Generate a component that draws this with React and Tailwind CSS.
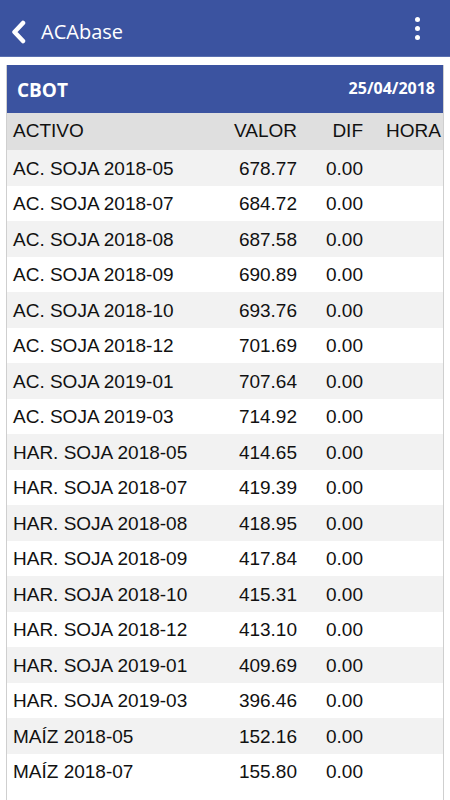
import React from "react";

const rows = [
  ["AC. SOJA 2018-05", "678.77"],
  ["AC. SOJA 2018-07", "684.72"],
  ["AC. SOJA 2018-08", "687.58"],
  ["AC. SOJA 2018-09", "690.89"],
  ["AC. SOJA 2018-10", "693.76"],
  ["AC. SOJA 2018-12", "701.69"],
  ["AC. SOJA 2019-01", "707.64"],
  ["AC. SOJA 2019-03", "714.92"],
  ["HAR. SOJA 2018-05", "414.65"],
  ["HAR. SOJA 2018-07", "419.39"],
  ["HAR. SOJA 2018-08", "418.95"],
  ["HAR. SOJA 2018-09", "417.84"],
  ["HAR. SOJA 2018-10", "415.31"],
  ["HAR. SOJA 2018-12", "413.10"],
  ["HAR. SOJA 2019-01", "409.69"],
  ["HAR. SOJA 2019-03", "396.46"],
  ["MAÍZ 2018-05", "152.16"],
  ["MAÍZ 2018-07", "155.80"],
];

export default function App() {
  return (
    <div className="w-[450px] h-[800px] overflow-hidden bg-white" style={{ fontFamily: '"Liberation Sans", Arial, sans-serif' }}>
      <div className="h-[57px] bg-[#3b53a0] flex items-center pt-[7px] border-b border-[#5a70b0]" style={{ fontFamily: '"Open Sans", sans-serif' }}>
        <svg width="18" height="24" viewBox="0 0 18 24" className="ml-[9px]">
          <path d="M14 3 L5.5 12 L14 21" stroke="white" strokeWidth="4.5" fill="none" strokeLinecap="round" strokeLinejoin="round" />
        </svg>
        <span className="ml-[14px] text-white text-[20px] leading-none">ACAbase</span>
        <div className="ml-auto mr-[30px] -mt-[6px] flex flex-col gap-[4px]">
          <div className="w-[5px] h-[5px] rounded-full bg-white" />
          <div className="w-[5px] h-[5px] rounded-full bg-white" />
          <div className="w-[5px] h-[5px] rounded-full bg-white" />
        </div>
      </div>
      <div className="mt-[8px] mx-[6px] border-x border-[#cfcfcf] h-[760px]">
        <div className="h-[48px] bg-[#3b53a0] flex items-center px-[10px] text-white font-bold" style={{ fontFamily: '"Open Sans", sans-serif' }}>
          <span className="text-[19px] mt-[3px]">CBOT</span>
          <span className="ml-auto text-[16px] -mt-[3px] mr-[-2px]">25/04/2018</span>
        </div>
        <div className="h-[37px] bg-[#dfdfdf] flex items-center text-[19px] text-[#111]">
          <div className="w-[213px] pl-[6px]">ACTIVO</div>
          <div className="w-[77px] text-right">VALOR</div>
          <div className="w-[66px] text-right">DIF</div>
          <div className="w-[78px] text-right">HORA</div>
        </div>
        {rows.map(([n, v], i) => (
          <div key={i} className={`h-[35.5px] flex items-center pt-[2px] text-[19px] text-[#111] ${i % 2 === 0 ? "bg-[#f2f2f2]" : "bg-white"}`}>
            <div className="w-[213px] pl-[6px] whitespace-nowrap">{n}</div>
            <div className="w-[77px] text-right">{v}</div>
            <div className="w-[66px] text-right">0.00</div>
            <div className="w-[78px] text-right"></div>
          </div>
        ))}
      </div>
    </div>
  );
}
